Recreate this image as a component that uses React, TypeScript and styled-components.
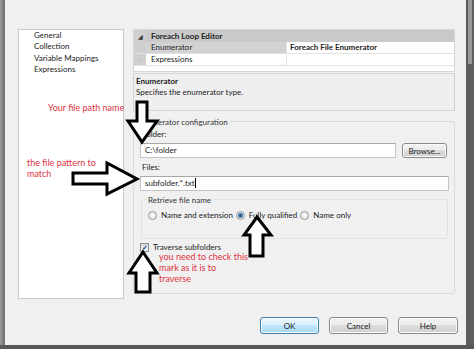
import styled, { createGlobalStyle } from "styled-components";

const GlobalStyle = createGlobalStyle`
  html, body {
    margin: 0;
    padding: 0;
    background: #f0f0f0;
  }
`;

const Screen = styled.div`
  position: relative;
  width: 474px;
  height: 349px;
  display: grid;
  grid-template-columns: 5px 1fr 8px;
  grid-template-rows: 345px 4px;
  overflow: hidden;
  font-family: Lato, "Noto Sans", sans-serif;
  font-size: 8px;
  color: #222;
`;

const LeftEdge = styled.div`
  background: linear-gradient(to right, #9c9c9c, #6a6a6a);
`;

const RightEdge = styled.div`
  background: #5e5e5e;
  padding: 0 2px;
`;

const Thumb = styled.div`
  height: 64px;
  background: #9a9a9a;
`;

const BottomEdge = styled.div`
  grid-column: 1 / -1;
  background: #575757;
`;

const Dialog = styled.div`
  background: #f0f0f0;
  padding: 29px 8px 0 13px;
  display: flex;
  flex-direction: column;
`;

const Main = styled.div`
  display: flex;
  gap: 9px;
  padding-right: 3px;
`;

const PageList = styled.ul`
  margin: 0;
  list-style: none;
  width: 106px;
  height: 270px;
  box-sizing: border-box;
  background: #fff;
  border: 1px solid #c9c9c9;
  padding: 0 0 0 15px;
`;

const PageItem = styled.li`
  line-height: 11.4px;
  white-space: nowrap;
`;

const Side = styled.div`
  width: 322px;
  display: flex;
  flex-direction: column;
`;

const Grid = styled.div`
  height: 43px;
  box-sizing: border-box;
  border: 1px solid #d6d6d6;
  background: #fff;
`;

const GridHead = styled.div`
  display: flex;
  align-items: center;
  height: 12px;
  background: #c9c9c9;
  font-weight: 700;
`;

const Gutter = styled.span<{ $grey?: boolean }>`
  width: 12px;
  height: 100%;
  flex: none;
  display: flex;
  align-items: center;
  justify-content: center;
  font-size: 6px;
  color: ${(p) => (p.$grey ? "#bdbdbd" : "#333")};
  background: #cfcfcf;
`;

const GridRow = styled.div`
  display: flex;
  height: 11px;
  border-bottom: 1px solid #e2e2e2;
  line-height: 11px;
`;

const NameCell = styled.span<{ $selected?: boolean }>`
  width: 141px;
  box-sizing: border-box;
  padding-left: 5px;
  background: ${(p) => (p.$selected ? "#d2d2d2" : "#fff")};
  border-right: 1px solid #e2e2e2;
`;

const ValueCell = styled.span`
  flex: 1;
  padding-left: 3px;
  font-weight: 700;
`;

const HeadText = styled.span`
  padding-left: 5px;
`;

const Description = styled.div`
  margin-top: 1px;
  height: 38px;
  box-sizing: border-box;
  border: 1px solid #d3d3d3;
  background: #efefef;
  padding: 2px 2px;
  line-height: 11px;
`;

const DescTitle = styled.div`
  font-weight: 700;
`;

const Group = styled.div<{ $inner?: boolean }>`
  border: 1px solid ${(p) => (p.$inner ? "#e2e2e2" : "#dadada")};
  border-radius: 3px;
  margin-top: ${(p) => (p.$inner ? 8 : 10)}px;
  height: ${(p) => (p.$inner ? 40 : 173)}px;
  box-sizing: border-box;
  padding: 0 ${(p) => (p.$inner ? 3 : 5)}px 0 ${(p) => (p.$inner ? 3 : 6)}px;
  margin-left: ${(p) => (p.$inner ? 1 : 0)}px;
  margin-right: ${(p) => (p.$inner ? 1 : 0)}px;
`;

const GroupTitle = styled.div<{ $inner?: boolean }>`
  width: fit-content;
  margin: -6px 0 0 ${(p) => (p.$inner ? 1 : -4)}px;
  padding: 0 2px;
  line-height: 12px;
  background: #f0f0f0;
  color: #333;
`;

const FieldLabel = styled.div<{ $gap: number }>`
  margin: ${(p) => p.$gap}px 0 0 2px;
  line-height: 11px;
`;

const FieldRow = styled.div`
  display: flex;
  gap: 6px;
  margin-top: 3px;
`;

const TextBox = styled.div<{ $width: number }>`
  width: ${(p) => p.$width}px;
  height: 15px;
  box-sizing: border-box;
  border: 1px solid #c5c5c5;
  border-top-color: #a9a9a9;
  background: #fff;
  padding-left: 4px;
  line-height: 13px;
  white-space: nowrap;
`;

const Caret = styled.span`
  display: inline-block;
  width: 1px;
  height: 10px;
  background: #000;
  vertical-align: -2px;
`;

const Button = styled.div<{ $default?: boolean; $width: number }>`
  width: ${(p) => p.$width}px;
  height: ${(p) => (p.$default !== undefined ? 17 : 15)}px;
  box-sizing: border-box;
  border: 1px solid ${(p) => (p.$default ? "#3c7fb1" : "#8a8a8a")};
  border-radius: 3px;
  background: ${(p) =>
    p.$default
      ? "linear-gradient(#eaf6fd, #d9f0fc 50%, #bee6fd 50%, #a7d9f5)"
      : "linear-gradient(#f2f2f2, #ebebeb 50%, #dddddd 50%, #cfcfcf)"};
  box-shadow: inset 0 0 0 1px #fcfcfc;
  display: flex;
  align-items: center;
  justify-content: center;
  color: #222;
`;

const RadioRow = styled.div`
  display: flex;
  align-items: center;
  gap: 3px;
  margin-top: 3px;
  padding-left: 3px;
  height: 12px;
`;

const Option = styled.label`
  display: flex;
  align-items: center;
  gap: 4px;
  white-space: nowrap;
`;

const Radio = styled.span<{ $on?: boolean }>`
  width: 9px;
  height: 9px;
  box-sizing: border-box;
  border-radius: 50%;
  border: 1px solid #9a9a9a;
  background: radial-gradient(circle at 50% 50%, ${(p) =>
    p.$on ? "#2d4f73 0, #4c7aa8 2px, #d8e6f2 3px" : "#fafafa 0, #e4e4e4 4px"});
`;

const CheckRow = styled.div`
  display: flex;
  align-items: center;
  gap: 4px;
  margin-top: 4px;
  height: 8px;
  line-height: 8px;
`;

const CheckBox = styled.span`
  width: 9px;
  height: 9px;
  box-sizing: border-box;
  border: 1px solid #8f8f8f;
  background: linear-gradient(#dcdcdc, #f6f6f6);
  display: flex;
  align-items: center;
  justify-content: center;
  color: #1d4f9a;
  font-size: 7px;
  font-weight: 700;
  line-height: 1;
`;

const ButtonRow = styled.div`
  display: flex;
  justify-content: flex-end;
  gap: 10px;
  margin-top: 18px;
`;

const Overlay = styled.svg`
  position: absolute;
  left: 0;
  top: 0;
  pointer-events: none;
`;

const Note = styled.div<{ $left: number; $top: number }>`
  position: absolute;
  left: ${(p) => p.$left}px;
  top: ${(p) => p.$top}px;
  font-family: Lato, "Open Sans", sans-serif;
  font-size: 9px;
  line-height: 11px;
  color: #e0323f;
  white-space: nowrap;
`;

const arrows = [
  "137,102 147,102 147,121 157,121 142,142 128,121 137,121",
  "73,173 107,173 107,163 137,179 107,194 107,184 73,184",
  "257,217 271,235 263,235 263,256 250,256 250,235 244,235",
  "143,252 157,273 150,273 150,292 136,292 136,273 129,273",
];

export default function App() {
  return (
    <>
      <GlobalStyle />
      <Screen>
        <LeftEdge />
        <Dialog>
          <Main>
            <PageList>
              <PageItem>General</PageItem>
              <PageItem>Collection</PageItem>
              <PageItem>Variable Mappings</PageItem>
              <PageItem>Expressions</PageItem>
            </PageList>
            <Side>
              <Grid>
                <GridHead>
                  <Gutter>◢</Gutter>
                  <HeadText>Foreach Loop Editor</HeadText>
                </GridHead>
                <GridRow>
                  <Gutter />
                  <NameCell $selected>Enumerator</NameCell>
                  <ValueCell>Foreach File Enumerator</ValueCell>
                </GridRow>
                <GridRow>
                  <Gutter $grey>▷</Gutter>
                  <NameCell>Expressions</NameCell>
                  <ValueCell />
                </GridRow>
              </Grid>
              <Description>
                <DescTitle>Enumerator</DescTitle>
                <div>Specifies the enumerator type.</div>
              </Description>
              <Group>
                <GroupTitle>Enumerator configuration</GroupTitle>
                <FieldLabel $gap={1}>Folder:</FieldLabel>
                <FieldRow>
                  <TextBox $width={256}>C:\folder</TextBox>
                  <Button $width={45}>Browse...</Button>
                </FieldRow>
                <FieldLabel $gap={4}>Files:</FieldLabel>
                <FieldRow>
                  <TextBox $width={309}>
                    subfolder.*.txt
                    <Caret />
                  </TextBox>
                </FieldRow>
                <Group $inner>
                  <GroupTitle $inner>Retrieve file name</GroupTitle>
                  <RadioRow>
                    <Option>
                      <Radio />
                      Name and extension
                    </Option>
                    <Option>
                      <Radio $on />
                      Fully qualified
                    </Option>
                    <Option>
                      <Radio />
                      Name only
                    </Option>
                  </RadioRow>
                </Group>
                <CheckRow>
                  <CheckBox>✓</CheckBox>
                  Traverse subfolders
                </CheckRow>
              </Group>
            </Side>
          </Main>
          <ButtonRow>
            <Button $default $width={59}>OK</Button>
            <Button $default={false} $width={59}>Cancel</Button>
            <Button $default={false} $width={60}>Help</Button>
          </ButtonRow>
        </Dialog>
        <RightEdge>
          <Thumb />
        </RightEdge>
        <BottomEdge />
        <Overlay width="474" height="349" viewBox="0 0 474 349">
          {arrows.map((points) => (
            <polygon
              key={points}
              points={points}
              fill="#fff"
              stroke="#000"
              strokeWidth="3"
              strokeLinejoin="miter"
            />
          ))}
        </Overlay>
        <Note $left={48} $top={102}>Your file path name</Note>
        <Note $left={27} $top={157}>
          the file pattern to
          <br />
          match
        </Note>
        <Note $left={159} $top={251}>
          you need to check this
          <br />
          mark as it is to
          <br />
          traverse
        </Note>
      </Screen>
    </>
  );
}
